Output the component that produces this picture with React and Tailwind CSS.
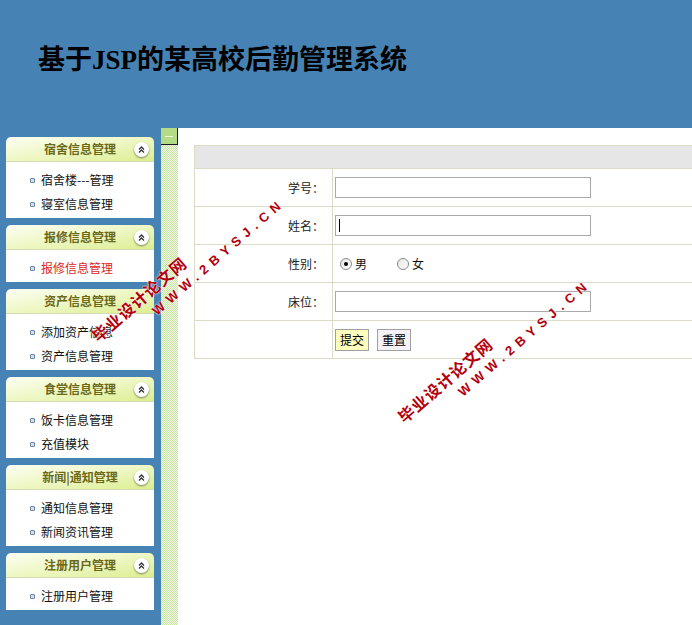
import React from "react";

const menus = [
    { title: "宿舍信息管理", items: ["宿舍楼---管理", "寝室信息管理"], toggle: true },
    { title: "报修信息管理", items: ["报修信息管理"], toggle: true, active: 0 },
    { title: "资产信息管理", items: ["添加资产信息", "资产信息管理"], toggle: false },
    { title: "食堂信息管理", items: ["饭卡信息管理", "充值模块"], toggle: true },
    { title: "新闻|通知管理", items: ["通知信息管理", "新闻资讯管理"], toggle: true },
    { title: "注册用户管理", items: ["注册用户管理"], toggle: true },
];

const cjk = "font-['Noto_Sans_CJK_SC',sans-serif]";

function Chevron() {
    return (
        <span className="flex h-[15px] w-[15px] items-center justify-center rounded-full bg-white shadow-[0_1px_2px_rgba(0,0,0,0.45)]">
            <svg width="9" height="9" viewBox="0 0 9 9" fill="none" stroke="#333" strokeWidth="1.3">
                <path d="M2 4.5 L4.5 2 L7 4.5" />
                <path d="M2 7.5 L4.5 5 L7 7.5" />
            </svg>
        </span>
    );
}

function MenuPanel({ menu }) {
    return (
        <div className="w-[148px]">
            <div className="relative flex h-[25px] items-center justify-center rounded-t-[5px] border-b border-[#d5dcb4] bg-linear-to-br from-[#fdfef2] via-[#eef7c4] to-[#dcee8f]">
                <span className="text-[12px] font-bold text-[#6b6818]">{menu.title}</span>
                {menu.toggle && (
                    <span className="absolute right-[5px] top-[5px]">
                        <Chevron />
                    </span>
                )}
            </div>
            <div className="bg-white pt-[6px] pb-[2px]">
                {menu.items.map((item, i) => (
                    <div key={item} className="flex h-[24px] items-center pl-[24px]">
                        <span className="mr-[6px] h-[5px] w-[5px] rounded-[1px] border border-[#6f86a3] bg-[#d3ddeb]" />
                        <span
                            className={
                                "text-[12px] " +
                                (menu.active === i ? "text-[#dd1f1f]" : "text-[#111]")
                            }
                        >
                            {item}
                        </span>
                    </div>
                ))}
            </div>
        </div>
    );
}

function Radio({ checked, label }) {
    return (
        <label className="flex items-center gap-[3px]">
            <span className="flex h-[12px] w-[12px] items-center justify-center rounded-full border border-[#8a8a8a] bg-linear-to-br from-[#e6e6e6] to-white">
                {checked && <span className="h-[4px] w-[4px] rounded-full bg-black" />}
            </span>
            <span className="text-[12px] text-[#111]">{label}</span>
        </label>
    );
}

function TextField({ caret }) {
    return (
        <div className="relative h-[21px] w-[256px] border border-[#a9a9a9] bg-white">
            {caret && <span className="absolute left-[3px] top-[3px] h-[13px] w-px bg-black" />}
        </div>
    );
}

function Watermark({ left, top }) {
    return (
        <div
            className="pointer-events-none absolute origin-top-left -rotate-[41deg] font-bold text-[#b3000c] [text-shadow:0_0_2px_#fff,0_0_1px_#fff]"
            style={{ left, top }}
        >
            <div className={"whitespace-nowrap text-[16px] leading-[18px] tracking-[1px] " + cjk}>
                毕业设计论文网
            </div>
            <div className="ml-[62px] mt-[4px] whitespace-nowrap font-['Liberation_Sans',sans-serif] text-[13px] leading-[16px] tracking-[5.6px]">
                WWW.2BYSJ.CN
            </div>
        </div>
    );
}

export default function App() {
    const rows = [
        { label: "学号：", field: <TextField /> },
        { label: "姓名：", field: <TextField caret /> },
        {
            label: "性别：",
            field: (
                <div className="flex items-center gap-[30px] pl-[5px]">
                    <Radio checked label="男" />
                    <Radio label="女" />
                </div>
            ),
        },
        { label: "床位：", field: <TextField /> },
        {
            label: "",
            field: (
                <div className="flex items-center gap-[8px]">
                    <button className="h-[22px] border border-[#a0a0a0] bg-[#fdfdbd] px-[4px] text-[12px] text-black">
                        提交
                    </button>
                    <button className="h-[22px] border border-[#a0a0a0] bg-[#f4f2f7] px-[4px] text-[12px] text-black">
                        重置
                    </button>
                </div>
            ),
        },
    ];

    return (
        <div className={"relative h-[625px] w-[692px] overflow-hidden bg-white " + cjk}>
            <header className="flex h-[128px] items-center bg-[#4682b4] pl-[38px] pb-[8px]">
                <h1 className="font-['Liberation_Serif','Noto_Sans_CJK_SC',serif] text-[27px] font-bold text-black">
                    基于JSP的某高校后勤管理系统
                </h1>
            </header>
            <div className="flex h-[497px]">
                <aside className="flex w-[161px] flex-col gap-[7px] bg-[#4682b4] pl-[6px] pt-[9px]">
                    {menus.map((m) => (
                        <MenuPanel key={m.title} menu={m} />
                    ))}
                </aside>
                <div className="flex w-[17px] flex-col bg-[repeating-conic-gradient(#c6e6a0_0_25%,#f3fbe8_0_50%)] bg-[length:2px_2px]">
                    <div className="flex h-[17px] items-center justify-center border-r border-b border-[#1a1a1a] bg-[#b4db86]">
                        <span className="h-px w-[8px] bg-[#eef8e0]" />
                    </div>
                </div>
                <main className="flex-1 overflow-hidden pl-[16px] pt-[17px]">
                    <table className="w-[540px] border-collapse border border-[#dcdcc6] text-[12px]">
                        <tbody>
                            <tr className="h-[23px] bg-[#e6e6e6]">
                                <td colSpan={2} className="border border-[#dcdcc6]" />
                            </tr>
                            {rows.map((r, i) => (
                                <tr key={i} className="h-[38px]">
                                    <td className="w-[138px] border border-[#dcdcc6] pr-[8px] text-right text-[#222]">
                                        {r.label}
                                    </td>
                                    <td className="border border-[#dcdcc6] pl-[2px]">{r.field}</td>
                                </tr>
                            ))}
                        </tbody>
                    </table>
                </main>
            </div>
            <Watermark left={88} top={331} />
            <Watermark left={394} top={412} />
        </div>
    );
}
